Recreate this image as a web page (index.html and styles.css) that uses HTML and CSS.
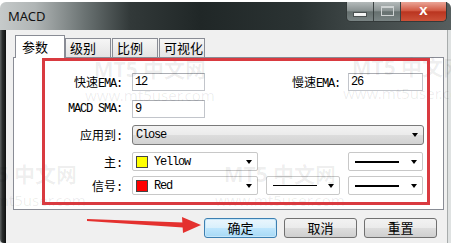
FILE: index.html
```html
<!DOCTYPE html>
<html>
<head>
  <title>MACD</title>
  <link rel="stylesheet" href="styles.css">
</head>
<body>
  <div class="window">
    <div class="titlebar">
      <span class="title">MACD</span>
      <div class="caption">
        <div class="cap cap-min"><span class="bar"></span></div>
        <div class="cap cap-max"><span class="box"></span></div>
        <div class="cap cap-close">x</div>
      </div>
    </div>

    <div class="frame">
      <div class="frame-left"></div>
      <div class="client">
        <div class="tabs">
          <div class="tab active">参数</div>
          <div class="tab">级别</div>
          <div class="tab">比例</div>
          <div class="tab">可视化</div>
        </div>

        <div class="panel">
          <div class="row row-fast">
            <label class="lbl"><span class="cn">快速</span>EMA:</label>
            <div class="edit">12</div>
            <label class="lbl lbl-slow"><span class="cn">慢速</span>EMA:</label>
            <div class="edit edit-slow">26</div>
          </div>
          <div class="row row-sma">
            <label class="lbl">MACD SMA:</label>
            <div class="edit">9</div>
          </div>
          <div class="row row-apply">
            <label class="lbl"><span class="cn">应用到</span>:</label>
            <div class="combo combo-btn">Close<span class="arrow"></span></div>
          </div>
          <div class="row row-main">
            <label class="lbl"><span class="cn">主</span>:</label>
            <div class="combo combo-color"><span class="swatch yellow"></span>Yellow<span class="arrow"></span></div>
            <div class="combo combo-line line-far"><span class="line thick"></span><span class="arrow"></span></div>
          </div>
          <div class="row row-signal">
            <label class="lbl"><span class="cn">信号</span>:</label>
            <div class="combo combo-color"><span class="swatch red"></span>Red<span class="arrow"></span></div>
            <div class="combo combo-line line-mid"><span class="line thin"></span><span class="arrow"></span></div>
            <div class="combo combo-line line-mid"><span class="line thick"></span><span class="arrow"></span></div>
          </div>
        </div>

        <div class="buttons">
          <button class="btn btn-default">确定</button>
          <button class="btn">取消</button>
          <button class="btn">重置</button>
        </div>
      </div>
    </div>

    <!-- watermark of the source site -->
    <div class="wm wm-a"><span class="wm-big">MT5 中文网</span><span class="wm-url">www.mt5user.com</span></div>
    <div class="wm wm-b"><span class="wm-big">MT5 中文网</span><span class="wm-url">www.mt5user.com</span></div>
    <div class="wm wm-c"><span class="wm-big">MT5 中文网</span><span class="wm-url">www.mt5user.com</span></div>
    <div class="wm wm-d"><span class="wm-big">MT5 中文网</span><span class="wm-url">www.mt5user.com</span></div>

    <!-- red annotations -->
    <div class="mark-box"></div>
    <svg class="mark-arrow" width="451" height="246" viewBox="0 0 451 246">
      <polygon points="87,219 183,222.5 183,227.5 87,221" fill="#e4312f"/>
      <polygon points="182,217 201,225 183,233" fill="#e4312f"/>
    </svg>
  </div>
</body>
</html>
```

FILE: styles.css
```css
body {
  margin: 0;
  background: #fff;
  font-family: "Liberation Mono", "Noto Sans CJK SC", monospace;
}

.window {
  position: relative;
  width: 451px;
  height: 243px;
  padding-top: 2px;
  box-sizing: border-box;
  display: flex;
  flex-direction: column;
  overflow: hidden;
}

/* title bar */
.titlebar {
  height: 28px;
  flex-shrink: 0;
  display: flex;
  border-radius: 6px 6px 0 0;
  background: linear-gradient(90deg, #c6caca 0, #b0b5b5 35px, #6a7272 85px, #323939 130px, #202727 200px, #2b3333 300px, #3b4343 345px, #565e5e 451px);
}

.title {
  padding-left: 8px;
  line-height: 28px;
  font-family: "Noto Sans", sans-serif;
  font-size: 13px;
  color: #111;
}

.caption {
  margin-left: auto;
  margin-right: 4px;
  height: 19px;
  display: flex;
  border: 1px solid #343a3a;
  border-top: none;
  border-radius: 0 0 5px 5px;
  overflow: hidden;
}

.cap {
  height: 19px;
  display: flex;
  align-items: center;
  justify-content: center;
  box-sizing: border-box;
}

.cap-min,
.cap-max {
  width: 27px;
  border-right: 1px solid #3b4242;
  background: linear-gradient(#b4baba, #8a9292 45%, #66706f 52%, #7a8484);
}

.cap-min .bar {
  width: 12px;
  height: 3px;
  margin-top: 6px;
  background: #f4f4f4;
  border: 1px solid #4a5050;
}

.cap-max .box {
  width: 11px;
  height: 7px;
  border: 1px solid #cfd3d3;
  border-top-width: 2px;
  margin-top: -2px;
}

.cap-close {
  width: 45px;
  background: linear-gradient(#eaa597, #d25a44 45%, #ba3520 52%, #cc5138);
  color: #fff;
  font-family: "Liberation Sans", sans-serif;
  font-weight: bold;
  font-size: 15px;
  line-height: 15px;
  padding-bottom: 4px;
}

/* window frame */
.frame {
  flex: 1;
  display: flex;
  background: #dfe2e2;
  padding-right: 3px;
}

.frame-left {
  width: 6px;
  border-radius: 0 0 0 4px;
  background: linear-gradient(90deg, #5e6262, #2a2d2d 40%, #0e0f0f);
}

.client {
  flex: 1;
  background: #f0f0f0;
  border-right: 1px solid #a8acac;
  padding-top: 5px;
}

/* tabs */
.tabs {
  height: 22px;
  display: flex;
  align-items: flex-end;
  padding-left: 9px;
}

.tab {
  width: 46px;
  height: 19px;
  margin-left: 1px;
  box-sizing: border-box;
  padding-left: 4px;
  border: 1px solid #898c95;
  border-bottom: none;
  background: linear-gradient(#f6f6f6, #e4e4e4);
  font-family: "Noto Sans CJK SC", sans-serif;
  font-size: 13px;
  line-height: 18px;
  white-space: nowrap;
}

.tab.active {
  width: 50px;
  height: 23px;
  margin-left: 0;
  margin-bottom: -1px;
  padding-left: 6px;
  position: relative;
  z-index: 1;
  background: #fff;
  line-height: 21px;
}

.tab.active + .tab {
  margin-left: 0;
}

/* page */
.panel {
  width: 431px;
  height: 153px;
  margin-left: 7px;
  box-sizing: border-box;
  border: 1px solid #898c95;
  background: #fff;
  padding-top: 15px;
  font-size: 12px;
  letter-spacing: -1.2px;
}

.cn {
  font-family: "Noto Sans CJK SC", sans-serif;
  font-size: 12px;
  letter-spacing: 0;
}

.row {
  display: flex;
  align-items: center;
}

.row-sma { margin-top: 9px; }
.row-apply { margin-top: 7px; }
.row-main { margin-top: 7px; }
.row-signal { margin-top: 5px; }

.lbl {
  width: 108px;
  margin-right: 10px;
  text-align: right;
  white-space: nowrap;
  color: #000;
}

.lbl.lbl-slow {
  width: 135px;
  margin-right: 8px;
}

.edit {
  width: 73px;
  height: 18px;
  box-sizing: border-box;
  border: 1px solid #c2c5cb;
  border-top-color: #abadb3;
  padding-left: 2px;
  line-height: 16px;
}

.edit.edit-slow {
  width: 75px;
}

.combo {
  height: 19px;
  box-sizing: border-box;
  display: flex;
  align-items: center;
  border: 1px solid #c8c8c8;
  border-radius: 2px;
  background: #fff;
}

.combo-btn {
  width: 292px;
  height: 20px;
  padding-left: 3px;
  border-color: #7a7a7a;
  border-radius: 3px;
  background: linear-gradient(#f3f3f3, #ebebeb 48%, #dcdcdc 52%, #d2d2d2);
}

.combo-color {
  width: 126px;
  padding-left: 3px;
}

.swatch {
  width: 10px;
  height: 10px;
  margin-right: 6px;
  border: 1px solid #444;
}

.swatch.yellow { background: #ffff00; }
.swatch.red { background: #f00; }

.combo-line {
  width: 75px;
  padding-left: 6px;
}

.line-far { margin-left: 90px; }
.line-mid { margin-left: 8px; }
.combo-line.line-mid:nth-child(3) { width: 74px; }

.line {
  width: 44px;
  background: #000;
}

.line.thick { height: 2px; }
.line.thin { height: 1px; }

.arrow {
  margin-left: auto;
  margin-right: 5px;
  width: 0;
  height: 0;
  border-left: 3.5px solid transparent;
  border-right: 3.5px solid transparent;
  border-top: 4px solid #000;
}

/* dialog buttons */
.buttons {
  display: flex;
  justify-content: flex-end;
  gap: 7px;
  margin-top: 8px;
  padding-right: 10px;
}

.btn {
  width: 73px;
  height: 20px;
  padding: 0;
  border: 1px solid #707070;
  border-radius: 3px;
  background: linear-gradient(#f2f2f2, #ebebeb 48%, #dddddd 52%, #cfcfcf);
  font-family: "Noto Sans CJK SC", sans-serif;
  font-size: 13px;
  line-height: 18px;
  color: #000;
}

.btn.btn-default {
  border-color: #3c7fb1;
  background: linear-gradient(#eaf6fd, #d9f0fc 48%, #bee6fd 52%, #a7d9f5);
  box-shadow: inset 0 0 0 1px #c6e7fa;
}

/* watermark */
.wm {
  position: absolute;
  display: flex;
  flex-direction: column;
  align-items: center;
  color: rgba(0, 0, 0, 0.07);
  font-family: "Noto Sans", "Noto Sans CJK SC", sans-serif;
  pointer-events: none;
  white-space: nowrap;
}

.wm-big {
  font-size: 21px;
  font-weight: bold;
  line-height: 24px;
}

.wm-url {
  font-size: 15px;
  line-height: 18px;
  margin-top: 5px;
}

.wm-a { left: 85px; top: 57px; }
.wm-b { left: 343px; top: 55px; }
.wm-c { left: -44px; top: 162px; }
.wm-d { left: 215px; top: 162px; }

/* annotations */
.mark-box {
  position: absolute;
  left: 42px;
  top: 58px;
  width: 388px;
  height: 147px;
  box-sizing: border-box;
  border: 3px solid #d93a40;
  pointer-events: none;
}

.mark-arrow {
  position: absolute;
  left: 0;
  top: 0;
  pointer-events: none;
}
```
